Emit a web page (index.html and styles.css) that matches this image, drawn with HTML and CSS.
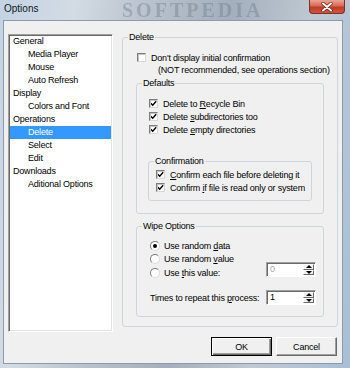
FILE: index.html
```html
<!DOCTYPE html>
<html>
<head>
<meta charset="utf-8">
<title>Options</title>
<link rel="stylesheet" href="styles.css">
</head>
<body>
<div class="window">
  <div class="titlebar">
    <span class="title">Options</span>
    <span class="watermark">SOFTPEDIA</span>
    <div class="close">
      <svg width="12" height="10" viewBox="0 0 12 10"><path d="M2 1.5 L10 8.5 M10 1.5 L2 8.5" stroke="#5a1a12" stroke-width="3.2" stroke-linecap="round"/><path d="M2 1.5 L10 8.5 M10 1.5 L2 8.5" stroke="#fff" stroke-width="2" stroke-linecap="round"/></svg>
    </div>
  </div>
  <div class="client">
    <ul class="tree">
      <li>General</li>
      <li class="child">Media Player</li>
      <li class="child">Mouse</li>
      <li class="child">Auto Refresh</li>
      <li>Display</li>
      <li class="child">Colors and Font</li>
      <li>Operations</li>
      <li class="child sel">Delete</li>
      <li class="child">Select</li>
      <li class="child">Edit</li>
      <li>Downloads</li>
      <li class="child">Aditional Options</li>
    </ul>
    <div class="right">
      <div class="group outer">
        <span class="glabel">Delete</span>
        <div class="row first"><span class="box"></span><span>Don't display initial confirmation</span></div>
        <div class="note">(NOT recommended, see operations section)</div>
        <div class="group defaults">
          <span class="glabel">Defaults</span>
          <div class="row ind"><span class="box on"></span><span>Delete to <u>R</u>ecycle Bin</span></div>
          <div class="row ind"><span class="box on"></span><span>Delete <u>s</u>ubdirectories too</span></div>
          <div class="row ind"><span class="box on"></span><span>Delete <u>e</u>mpty directories</span></div>
          <div class="group confirm">
            <span class="glabel">Confirmation</span>
            <div class="row"><span class="box on"></span><span><u>C</u>onfirm each file before deleting it</span></div>
            <div class="row"><span class="box on"></span><span>Confirm <u>i</u>f file is read only or system</span></div>
          </div>
        </div>
        <div class="group wipe">
          <span class="glabel">Wipe Options</span>
          <div class="wipe-top">
            <div class="radios">
              <div class="rrow"><span class="radio on"></span><span>Use random <u>d</u>ata</span></div>
              <div class="rrow"><span class="radio"></span><span>Use random <u>v</u>alue</span></div>
              <div class="rrow"><span class="radio"></span><span>Use <u>t</u>his value:</span></div>
            </div>
            <div class="spin disabled">
              <span class="val">0</span>
              <span class="btns"><span class="up"></span><span class="down"></span></span>
            </div>
          </div>
          <div class="times">
            <span>Times to repeat this <u>p</u>rocess:</span>
            <div class="spin">
              <span class="val">1</span>
              <span class="btns"><span class="up"></span><span class="down"></span></span>
            </div>
          </div>
        </div>
      </div>
      <div class="buttons">
        <button class="btn default">OK</button>
        <button class="btn">Cancel</button>
      </div>
    </div>
  </div>
</div>
</body>
</html>
```

FILE: styles.css
```css
* { box-sizing: border-box; }
html, body { margin: 0; padding: 0; }
body {
  width: 350px;
  height: 368px;
  overflow: hidden;
  font-family: "Liberation Sans", Arial, sans-serif;
  font-size: 9px;
  letter-spacing: -0.2px;
  color: #000;
}
.window {
  width: 350px;
  height: 368px;
  display: flex;
  flex-direction: column;
  background: linear-gradient(100deg, #c3d3e4 0%, #d3dbe4 18%, #b9c2cc 36%, #a3afbc 56%, #bfc9d3 76%, #a8bfd7 100%);
}
.titlebar {
  position: relative;
  height: 20px;
  display: flex;
  justify-content: space-between;
  align-items: flex-start;
  padding-left: 4px;
}
.title {
  font-size: 10px;
  letter-spacing: 0;
  line-height: 17px;
  color: #101820;
}
.watermark {
  position: absolute;
  left: 122px;
  top: 0;
  font-family: "Liberation Serif", serif;
  font-weight: bold;
  font-size: 20px;
  line-height: 20px;
  letter-spacing: 3px;
  color: rgba(110, 124, 142, 0.42);
  filter: blur(0.5px);
}
.close {
  width: 36px;
  height: 14px;
  margin-right: 5px;
  border: 1px solid #7a3026;
  border-top: none;
  border-radius: 0 0 4px 4px;
  background: linear-gradient(#e9a595 0%, #d86a53 45%, #c23a25 55%, #d0553c 100%);
  display: flex;
  align-items: center;
  justify-content: center;
}
.client {
  position: relative;
  z-index: 1;
  margin-left: 3px;
  width: 340px;
  height: 344px;
  border: 1px solid #8c9aa9;
  background: #f0f0f0;
  display: flex;
  gap: 9px;
  padding: 13px 4px 0 4px;
}
.tree {
  width: 105px;
  height: 298px;
  margin: 0;
  padding: 0 1px;
  list-style: none;
  background: #fff;
  border: 1px solid;
  border-color: #a0a0a0 #fff #fff #a0a0a0;
  box-shadow: inset 1px 1px #696969, inset -1px -1px #e3e3e3;
}
.tree li {
  height: 13px;
  line-height: 13px;
  padding-left: 3px;
  white-space: nowrap;
}
.tree li.child { padding-left: 18px; }
.tree li.sel { background: #3399ff; color: #fff; }
.right {
  width: 216px;
  display: flex;
  flex-direction: column;
  padding-top: 3px;
}
.group {
  position: relative;
  border: 1px solid #cdd6de;
  border-radius: 3px;
}
.glabel {
  position: absolute;
  top: -7px;
  left: 5px;
  padding: 0 1px;
  line-height: 13px;
  background: #f0f0f0;
}
.outer { padding: 13px 13px 9px 13px; }
.row {
  display: flex;
  align-items: center;
  height: 13px;
  white-space: nowrap;
}
.row.first, .row.ind { padding-left: 1px; }
.box {
  width: 9px;
  height: 9px;
  margin-right: 5px;
  flex: none;
  background: #fff;
  border: 1px solid;
  border-color: #7c7c7c #d8d8d8 #d8d8d8 #7c7c7c;
  box-shadow: inset 1px 1px #c4c4c4;
}
.box.on {
  background: #fff url("data:image/svg+xml;utf8,<svg xmlns='http://www.w3.org/2000/svg' width='7' height='7' viewBox='0 0 7 7'><path d='M0.8 3.2 L2.7 5.2 L6.2 1.2' fill='none' stroke='black' stroke-width='1.4'/></svg>") center / 7px 7px no-repeat;
}
.note {
  padding-left: 22px;
  line-height: 13px;
  white-space: nowrap;
}
.defaults {
  margin-top: 6px;
  padding: 13px 11px 12px 11px;
}
.confirm {
  margin-top: 25px;
  padding: 6px 7px 6px 7px;
}
.wipe {
  margin-top: 12px;
  padding: 12px 7px 11px 13px;
}
.wipe-top {
  display: flex;
  justify-content: space-between;
  align-items: flex-end;
}
.rrow {
  display: flex;
  align-items: center;
  height: 13.5px;
  white-space: nowrap;
}
.radio {
  position: relative;
  width: 10px;
  height: 10px;
  margin-right: 4px;
  flex: none;
  border-radius: 50%;
  background: #fff;
  border: 1px solid;
  border-color: #7c7c7c #dcdcdc #dcdcdc #7c7c7c;
}
.radio.on::after {
  content: "";
  position: absolute;
  left: 2px;
  top: 2px;
  width: 4px;
  height: 4px;
  border-radius: 50%;
  background: #000;
}
.spin {
  width: 50px;
  height: 15px;
  display: flex;
  background: #fff;
  border: 1px solid;
  border-color: #a0a0a0 #fff #fff #a0a0a0;
  box-shadow: inset 1px 1px #696969;
}
.wipe-top .spin { margin-bottom: 2.5px; }
.spin .val {
  flex: 1;
  padding-left: 3px;
  line-height: 13px;
}
.spin.disabled .val { color: #a8a8a8; }
.spin .btns {
  width: 11px;
  margin: 1px 1px 1px 0;
  display: flex;
  flex-direction: column;
}
.spin .btns span {
  flex: 1;
  display: flex;
  align-items: center;
  justify-content: center;
  background: #f0f0f0;
  border: 1px solid;
  border-color: #fff #696969 #696969 #fff;
}
.spin .btns .up::before {
  content: "";
  border-left: 3px solid transparent;
  border-right: 3px solid transparent;
  border-bottom: 3px solid #000;
}
.spin .btns .down::before {
  content: "";
  border-left: 3px solid transparent;
  border-right: 3px solid transparent;
  border-top: 3px solid #000;
}
.times {
  margin-top: 10.5px;
  display: flex;
  align-items: center;
  justify-content: space-between;
  white-space: nowrap;
}
.buttons {
  margin-top: 10px;
  display: flex;
  justify-content: flex-end;
  gap: 4px;
  padding-right: 1px;
}
.btn {
  width: 61px;
  height: 19px;
  padding: 0;
  font-family: "Liberation Sans", Arial, sans-serif;
  font-size: 9px;
  letter-spacing: -0.2px;
  color: #000;
  background: #f0f0f0;
  border: 1px solid;
  border-color: #fff #696969 #696969 #fff;
  box-shadow: inset -1px -1px #a0a0a0;
}
.btn.default {
  border: 1px solid #000;
  box-shadow: inset 1px 1px #fff, inset -1px -1px #696969, inset -2px -2px #a0a0a0;
}
```
